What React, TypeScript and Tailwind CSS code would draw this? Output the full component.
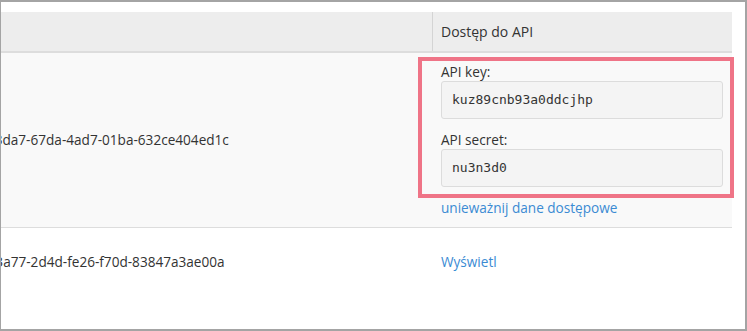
const rows = [
  {
    id: 'c41e3da7-67da-4ad7-01ba-632ce404ed1c',
    apiKey: 'kuz89cnb93a0ddcjhp',
    apiSecret: 'nu3n3d0',
    expanded: true,
  },
  {
    id: 'b91c3a77-2d4d-fe26-f70d-83847a3ae00a',
    expanded: false,
  },
];

const Field = ({ label, value, first }: { label: string; value: string; first?: boolean }) => (
  <div className={first ? '' : 'mt-3'}>
    <div className="leading-[18px] text-[#333]">{label}</div>
    <div className="flex h-[38px] items-center rounded-[3px] border border-[#dcdcdc] bg-[#f4f4f4] px-[10px] font-['DejaVu_Sans_Mono',monospace] text-[13px] text-[#333]">
      {value}
    </div>
  </div>
);

export default function App() {
  return (
    <div className="relative h-[331px] w-[747px] overflow-hidden border-t-2 border-r-2 border-b-2 border-l border-[#a4a4a4] bg-white pt-[10px] font-['Open_Sans',sans-serif] text-[13.6px] text-[#333]">
      <div className="ml-[-44px] w-[775px]">
        {/* header */}
        <div className="flex h-[41px] border-b-2 border-[#dddddd] bg-[#ededed]">
          <div className="flex-1" />
          <div className="flex w-[300px] items-center border-l border-[#d4d4d4] pl-2 text-[14px]">Dostęp do API</div>
        </div>

        {rows.map((row) =>
          row.expanded ? (
            <div key={row.id} className="flex border-b border-[#dddddd] bg-[#f9f9f9]">
              <div className="flex flex-1 items-center pl-2 whitespace-nowrap">{row.id}</div>
              <div className="w-[300px] border-l border-transparent pt-[10px] pr-[9px] pb-[10px] pl-2">
                <Field first label="API key:" value={row.apiKey!} />
                <Field label="API secret:" value={row.apiSecret!} />
                <a className="mt-3 block leading-[18px] text-[#3b8bd3]">unieważnij dane dostępowe</a>
              </div>
            </div>
          ) : (
            <div key={row.id} className="flex h-[68px] bg-white">
              <div className="flex flex-1 items-center pl-2 whitespace-nowrap">{row.id}</div>
              <div className="flex w-[300px] items-center border-l border-transparent pl-2">
                <a className="text-[#3b8bd3]">Wyświetl</a>
              </div>
            </div>
          )
        )}
      </div>

      {/* highlight annotation */}
      <div className="absolute top-[55px] left-[417px] h-[141px] w-[316px] border-4 border-[#ef7487]" />
    </div>
  );
}
